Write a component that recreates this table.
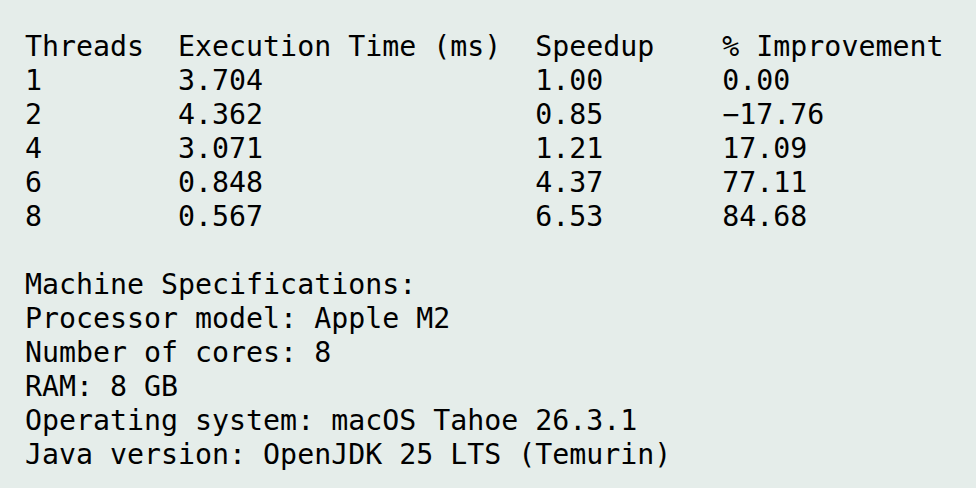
const rows = [
  ["Threads", "Execution Time (ms)", "Speedup", "% Improvement"],
  ["1", "3.704", "1.00", "0.00"],
  ["2", "4.362", "0.85", "\u221217.76"],
  ["4", "3.071", "1.21", "17.09"],
  ["6", "0.848", "4.37", "77.11"],
  ["8", "0.567", "6.53", "84.68"],
];

const specs = [
  "Machine Specifications:",
  "Processor model: Apple M2",
  "Number of cores: 8",
  "RAM: 8 GB",
  "Operating system: macOS Tahoe 26.3.1",
  "Java version: OpenJDK 25 LTS (Temurin)",
];

// fixed-width columns, same as the console printf
const widths = [9, 21, 11];

function pad(s: string, n: number) {
  return s + " ".repeat(Math.max(0, n - s.length));
}

export default function App() {
  return (
    <div className="w-[976px] h-[488px] bg-[#e5edea] pl-[25px] pt-[30px] overflow-hidden">
      <pre className="font-['DejaVu_Sans_Mono',monospace] text-[28.25px] leading-[34px] text-black">
        {rows.map((r) =>
          r.map((c, i) => (i < widths.length ? pad(c, widths[i]) : c)).join("")
        ).join("\n")}
        {"\n\n"}
        {specs.join("\n")}
      </pre>
    </div>
  );
}
